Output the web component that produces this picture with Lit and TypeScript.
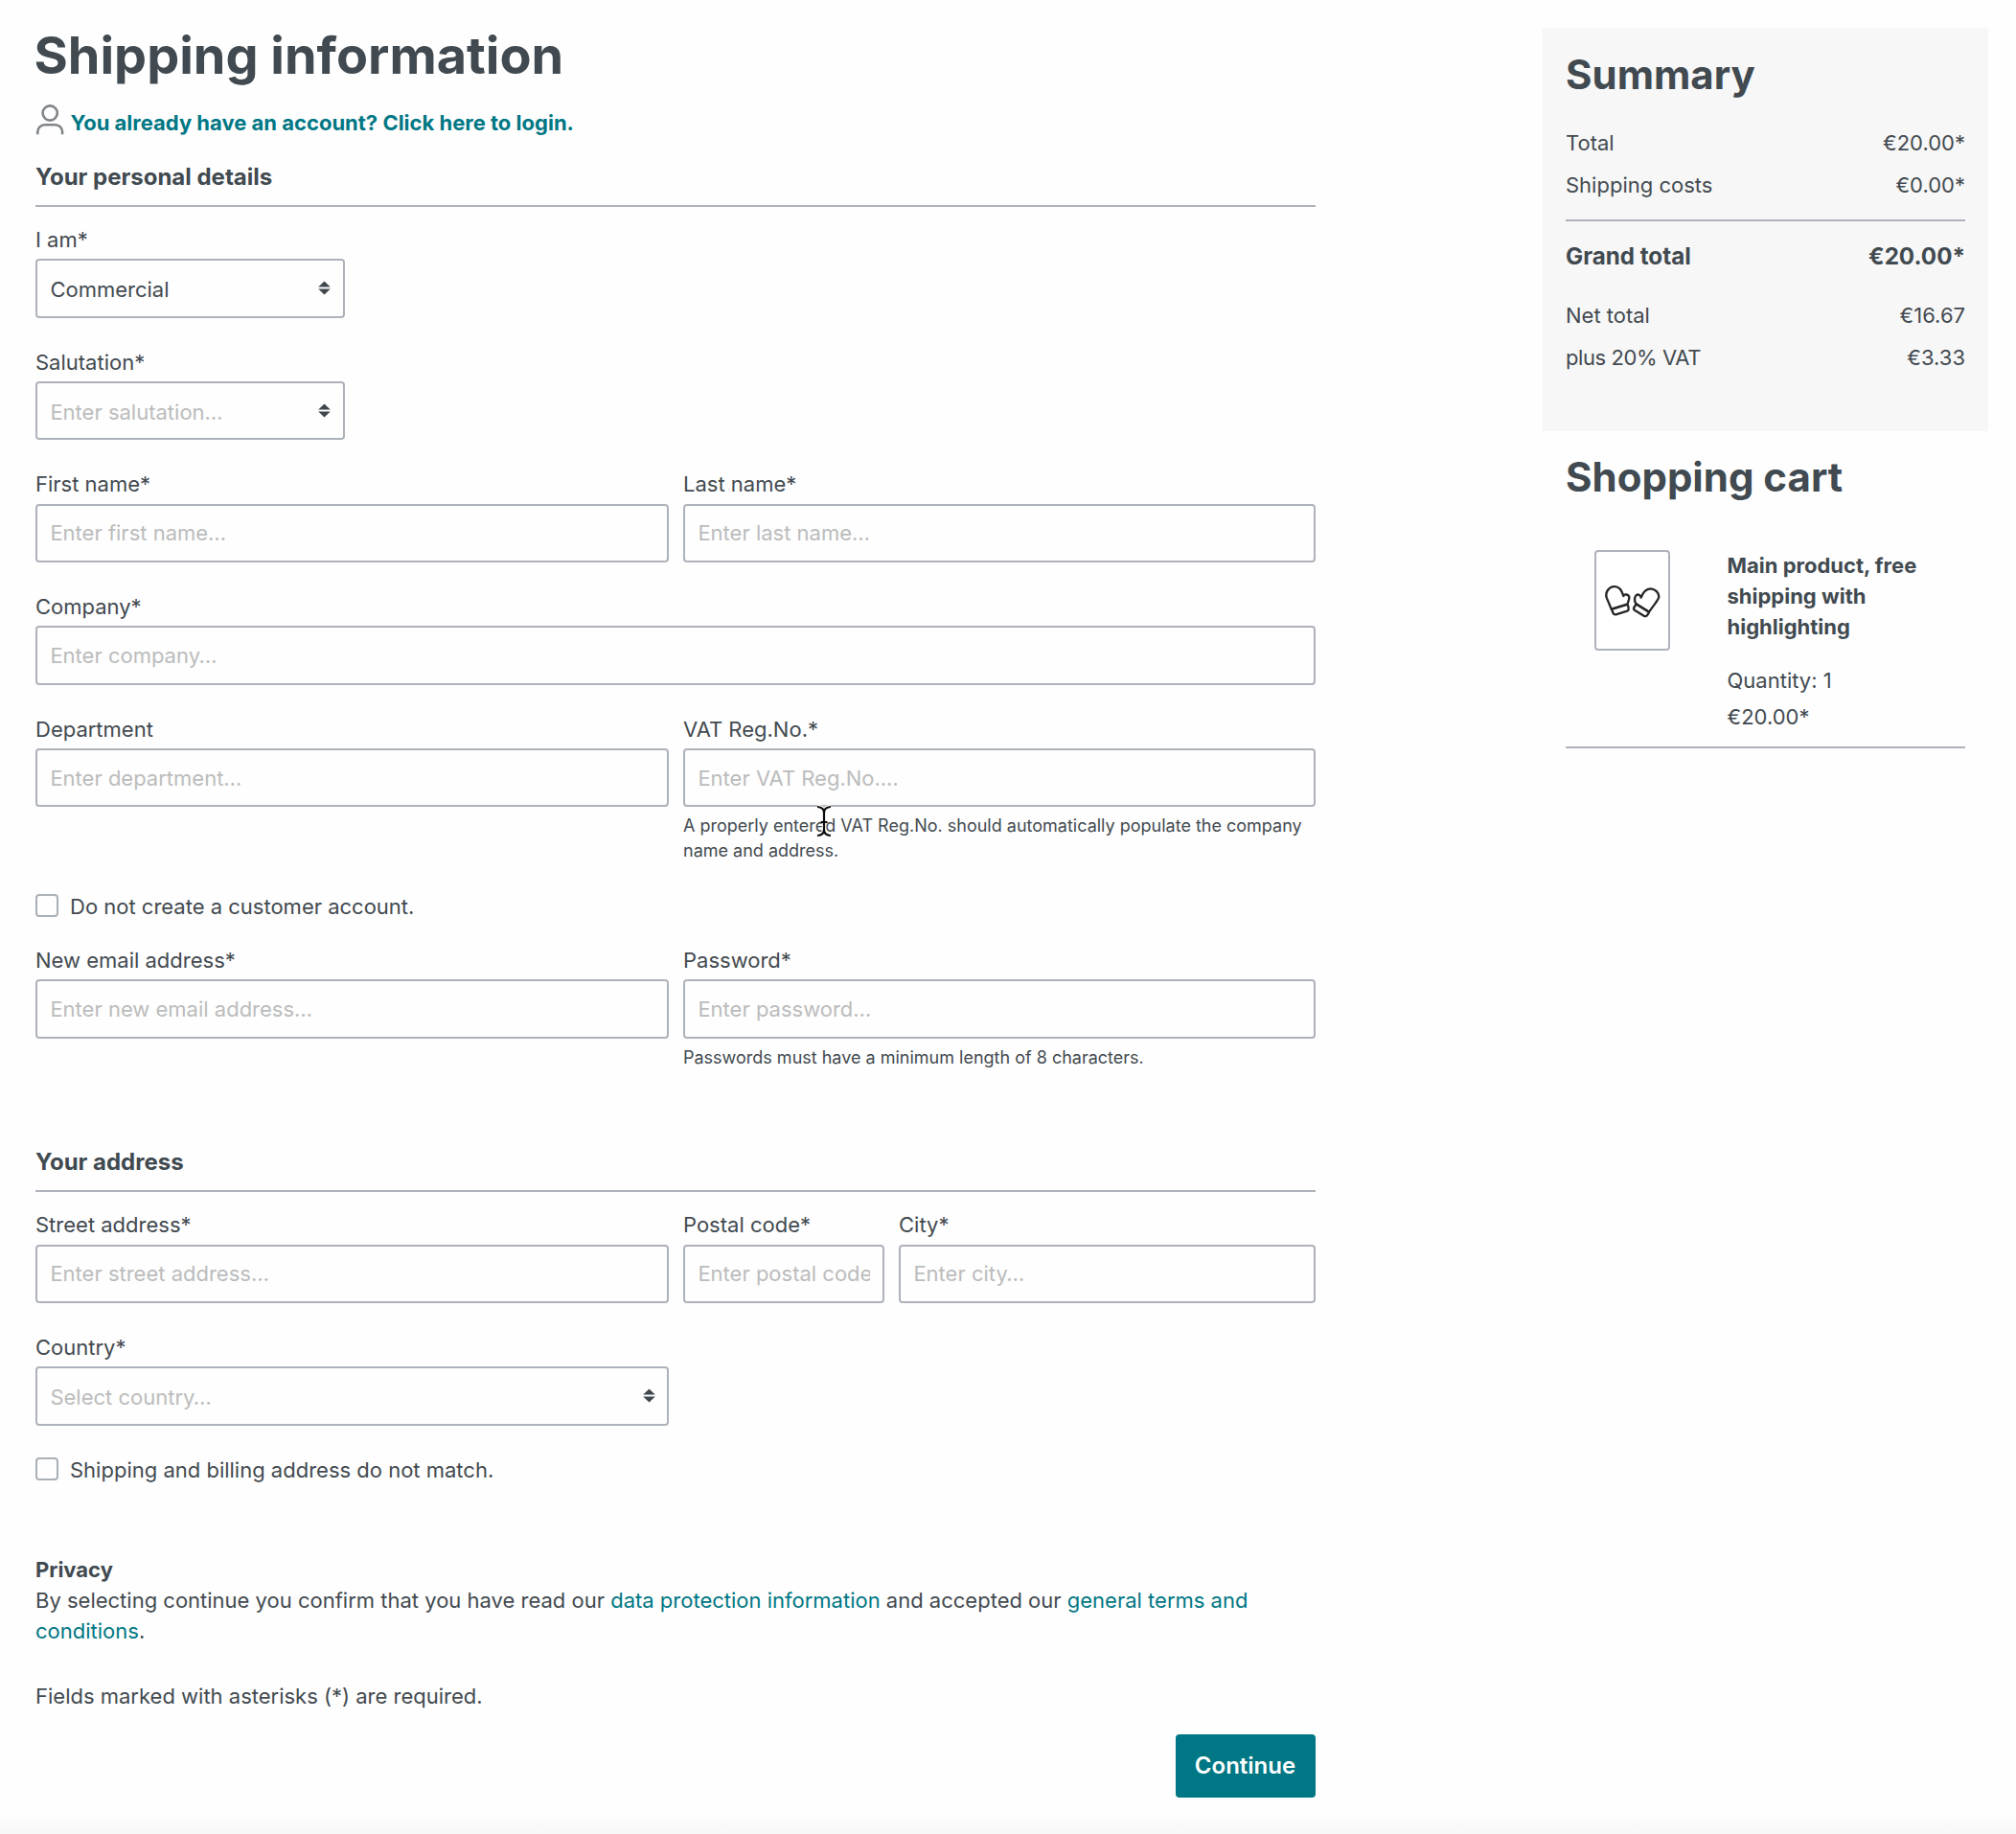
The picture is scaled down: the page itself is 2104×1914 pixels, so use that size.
import { LitElement, html, css, svg, nothing } from "lit";
import { customElement, property } from "lit/decorators.js";

const control = css`
  :host {
    display: block;
    min-width: 0;
  }
  .label {
    display: block;
    height: 32px;
    line-height: 32px;
    white-space: nowrap;
  }
  .control {
    display: block;
    box-sizing: border-box;
    width: 100%;
    height: 61.4px;
    margin: 4.3px 0 0;
    padding: 0 13.4px;
    border: 2px solid #aeb2bb;
    border-radius: 4px;
    background: #fefefe;
    color: #434a50;
    font: inherit;
    outline: none;
    appearance: none;
  }
`;

@customElement("text-field")
class TextField extends LitElement {
  @property() label = "";
  @property() placeholder = "";
  @property() type = "text";
  @property() help = "";

  static styles = [
    control,
    css`
      .control::placeholder {
        color: #bbbcbc;
        opacity: 1;
      }
      .help {
        margin-top: 7px;
        font-size: 18px;
        line-height: 25.8px;
      }
    `,
  ];

  render() {
    return html`
      <label class="label" for="input">${this.label}</label>
      <input id="input" class="control" type=${this.type} placeholder=${this.placeholder} />
      ${this.help ? html`<div class="help">${this.help}</div>` : nothing}
    `;
  }
}

@customElement("select-field")
class SelectField extends LitElement {
  @property() label = "";
  @property() value = "";
  @property({ type: Boolean }) empty = false;

  static styles = [
    control,
    css`
      .wrap {
        position: relative;
      }
      .control {
        padding-top: 2.500px;
      }
      .empty {
        color: #bbbcbc;
      }
      .arrows {
        position: absolute;
        right: 14.500px;
        top: 23px;
        width: 13px;
        height: 15px;
        pointer-events: none;
      }
    `,
  ];

  render() {
    return html`
      <label class="label" for="select">${this.label}</label>
      <div class="wrap">
        <select id="select" class="control ${this.empty ? "empty" : ""}">
          <option>${this.value}</option>
        </select>
        <svg class="arrows" viewBox="0 0 13 15" fill="#3f474d">
          <path d="M6.5 .6 12.8 6.4H.2zM6.5 14.4.2 8.6h12.600z" />
        </svg>
      </div>
    `;
  }
}

@customElement("check-field")
class CheckField extends LitElement {
  @property() label = "";

  static styles = css`
    :host {
      display: block;
    }
    .row {
      display: flex;
      align-items: flex-start;
      gap: 12px;
      height: 32px;
      line-height: 32px;
    }
    .box {
      appearance: none;
      box-sizing: border-box;
      width: 24px;
      height: 24px;
      margin: 3px 0 0;
      border: 2px solid #aab0b6;
      border-radius: 4px;
      background: #fefefe;
    }
  `;

  render() {
    return html`<label class="row"><input class="box" type="checkbox" />${this.label}</label>`;
  }
}

const userIcon = svg`
  <circle cx="14.200" cy="9" r="7.600" />
  <path d="M1.300 31.200V28.600a7.400 7.400 0 0 1 7.400-7.300h11a7.400 7.400 0 0 1 7.400 7.300v2.600" />
`;

const mittens = svg`
  <path d="M304 587 289 551C284 533 296 519 311 516.500C327 514 336 525 342 546C346 538 357 541 360 549C361 557 357 563 354 572Z" />
  <path d="M305 588 352 573Q356 573 357 578L358 588Q358 591 354 593L318 604Q312 605 310 600Z" />
  <path d="M381 571C377 563 376 553 380 546C385 538 395 541 397 551C403 534 413 524 427 523C442 524 453 536 453 548C452 559 444 564 422 596Z" />
  <path d="M382 571 418 593Q423 597 420 601L415 608Q411 611 406 608L378 591Q372 587 375 582Z" />
`;

@customElement("order-summary")
class OrderSummary extends LitElement {
  static styles = css`
    :host {
      display: block;
    }
    .panel {
      box-sizing: border-box;
      height: 420.500px;
      padding: 17px 24px 0;
      background: #f7f7f7;
    }
    .title {
      margin: 0;
      height: 64px;
      font-size: 42px;
      font-weight: 700;
      line-height: 64px;
      color: #414a50;
    }
    .line {
      display: flex;
      justify-content: space-between;
      height: 32px;
      line-height: 32px;
      margin-top: 12.300px;
    }
    .line.first {
      margin-top: 23px;
    }
    .line.grand {
      margin-top: 19.500px;
      padding-top: 21px;
      border-top: 2px solid #aeb2bb;
      font-size: 24.200px;
      font-weight: 700;
      color: #414a50;
    }
    .line.net {
      margin-top: 29px;
    }
    .vat {
      letter-spacing: -0.400px;
    }
    .cart {
      padding: 16px 24px 0;
    }
    .item {
      display: grid;
      grid-template-columns: 79px 1fr;
      column-gap: 59.500px;
      margin-top: 44.500px;
      padding: 0 0 11.500px 30px;
      border-bottom: 2px solid #aeb2bb;
    }
    .thumb {
      box-sizing: border-box;
      width: 79px;
      height: 105px;
      border: 2px solid #aeb2bb;
      border-radius: 4px;
      background: #fff;
    }
    .art {
      display: block;
      width: 75px;
      height: 101px;
      fill: none;
      stroke: #262626;
      stroke-width: 7;
      stroke-linejoin: round;
    }
    .name {
      width: 210px;
      line-height: 32.200px;
      font-weight: 700;
      color: #414a50;
    }
    .detail {
      line-height: 38.200px;
    }
    .detail.quantity {
      margin-top: 20px;
    }
  `;

  render() {
    return html`
      <section class="panel">
        <h2 class="title">Summary</h2>
        <div class="line first"><span>Total</span><span>€20.00*</span></div>
        <div class="line"><span>Shipping costs</span><span>€0.00*</span></div>
        <div class="line grand"><span>Grand total</span><span>€20.00*</span></div>
        <div class="line net"><span>Net total</span><span>€16.67</span></div>
        <div class="line"><span class="vat">plus 20% VAT</span><span>€3.33</span></div>
      </section>
      <section class="cart">
        <h2 class="title">Shopping cart</h2>
        <div class="item">
          <div class="thumb">
            <svg class="art" viewBox="257 408 225 303">${mittens}</svg>
          </div>
          <div>
            <div class="name">Main product, free shipping with highlighting</div>
            <div class="detail quantity">Quantity: 1</div>
            <div class="detail">€20.00*</div>
          </div>
        </div>
      </section>
    `;
  }
}

@customElement("app-root")
class AppRoot extends LitElement {
  static styles = css`
    :host {
      display: block;
      font-family: Inter, "Liberation Sans", sans-serif;
      font-size: 22px;
      line-height: 32px;
      color: #434a50;
      background: #fefefe;
    }
    .page {
      box-sizing: border-box;
      height: 1914px;
      overflow: hidden;
      display: flex;
      flex-direction: column;
    }
    .columns {
      flex: none;
      box-sizing: border-box;
      height: 1895px;
      display: grid;
      grid-template-columns: 1335.500px 465px;
      justify-content: space-between;
      align-items: start;
      padding: 25px 29px 0 37px;
    }
    .side {
      margin-top: 4px;
    }
    .page-end {
      flex: 1;
      background: linear-gradient(#fcfcfc, #f8f8f8);
    }
    .title {
      margin: 1px 0 0 -1.500px;
      font-size: 54px;
      line-height: 64px;
      font-weight: 700;
      color: #414a50;
    }
    .login {
      display: flex;
      align-items: flex-start;
      gap: 6.500px;
      height: 32px;
      margin-top: 22px;
      padding-left: 1px;
      color: #007784;
      font-weight: 700;
      text-decoration: none;
    }
    .user {
      width: 29px;
      height: 32px;
      margin-top: -3px;
      fill: none;
      stroke: #808589;
      stroke-width: 2.600;
    }
    .section {
      margin: 0;
      padding-bottom: 13px;
      border-bottom: 2px solid #aeb2bb;
      font-size: 24px;
      line-height: 32px;
      font-weight: 700;
      color: #414a50;
    }
    .personal {
      margin-top: 25px;
    }
    .address {
      margin-top: 81px;
    }
    .fields {
      display: grid;
      row-gap: 30px;
      margin-top: 18px;
    }
    .row {
      display: grid;
      gap: 15px;
    }
    .quarter {
      grid-template-columns: 322.500px;
    }
    .half {
      grid-template-columns: 661px 659.500px;
    }
    .split {
      grid-template-columns: 661px 210px 434.500px;
    }
    .no-account {
      margin-top: 28.800px;
    }
    .account {
      margin-top: 24px;
    }
    .mismatch {
      margin-top: 30.500px;
    }
    .privacy {
      margin: 72px 0 0;
    }
    .privacy-title {
      font-weight: 700;
      color: #414a50;
    }
    .link {
      color: #007784;
      text-decoration: none;
    }
    .required {
      margin: 35.500px 0 0;
    }
    .actions {
      display: flex;
      justify-content: flex-end;
      margin-top: 24.500px;
    }
    .continue {
      width: 146px;
      height: 66px;
      padding: 0;
      border: 0;
      border-radius: 4px;
      background: #007784;
      color: #fff;
      font: 600 24px/66px Inter, "Liberation Sans", sans-serif;
    }
    .cursor {
      position: absolute;
      left: 852px;
      top: 839.500px;
      width: 16px;
      height: 34px;
      fill: none;
    }
  `;

  render() {
    return html`
      <div class="page">
        <div class="columns">
          <main>
            <h1 class="title">Shipping information</h1>
            <a class="login">
              <svg class="user" viewBox="0 0 29 32">${userIcon}</svg>
              <span>You already have an account? Click here to login.</span>
            </a>

            <h2 class="section personal">Your personal details</h2>
            <div class="fields">
              <div class="row quarter"><select-field label="I am*" value="Commercial"></select-field></div>
              <div class="row quarter">
                <select-field label="Salutation*" value="Enter salutation…" empty></select-field>
              </div>
              <div class="row half">
                <text-field label="First name*" placeholder="Enter first name…"></text-field>
                <text-field label="Last name*" placeholder="Enter last name…"></text-field>
              </div>
              <div class="row"><text-field label="Company*" placeholder="Enter company…"></text-field></div>
              <div class="row half">
                <text-field label="Department" placeholder="Enter department…"></text-field>
                <text-field
                  label="VAT Reg.No.*"
                  placeholder="Enter VAT Reg.No.…"
                  help="A properly entered VAT Reg.No. should automatically populate the company name and address."
                ></text-field>
              </div>
            </div>
            <check-field class="no-account" label="Do not create a customer account."></check-field>
            <div class="row half account">
              <text-field label="New email address*" placeholder="Enter new email address…"></text-field>
              <text-field
                label="Password*"
                type="password"
                placeholder="Enter password…"
                help="Passwords must have a minimum length of 8 characters."
              ></text-field>
            </div>

            <h2 class="section address">Your address</h2>
            <div class="fields">
              <div class="row split">
                <text-field label="Street address*" placeholder="Enter street address…"></text-field>
                <text-field label="Postal code*" placeholder="Enter postal code…"></text-field>
                <text-field label="City*" placeholder="Enter city…"></text-field>
              </div>
              <div class="row half">
                <select-field label="Country*" value="Select country…" empty></select-field>
              </div>
            </div>
            <check-field class="mismatch" label="Shipping and billing address do not match."></check-field>

            <p class="privacy">
              <span class="privacy-title">Privacy</span><br />
              By selecting continue you confirm that you have read our
              <a class="link">data protection information</a> and accepted our
              <a class="link">general terms and conditions</a>.
            </p>
            <p class="required">Fields marked with asterisks (*) are required.</p>
            <div class="actions"><button class="continue">Continue</button></div>
          </main>
          <aside class="side"><order-summary></order-summary></aside>
        </div>
        <div class="page-end"></div>
        <svg class="cursor" viewBox="0 0 16 34">
          <g stroke="#fff" stroke-width="4.500">
            <path d="M1 2Q8 2.500 8 8Q8 2.500 15 2M8 7V27M1 32Q8 31.500 8 26Q8 31.500 15 32" />
          </g>
          <g stroke="#0b0b0b" stroke-width="2.200">
            <path d="M1 2Q8 2.500 8 8Q8 2.500 15 2M8 7V27M1 32Q8 31.500 8 26Q8 31.500 15 32M4.500 18H11.500" />
          </g>
        </svg>
      </div>
    `;
  }
}
